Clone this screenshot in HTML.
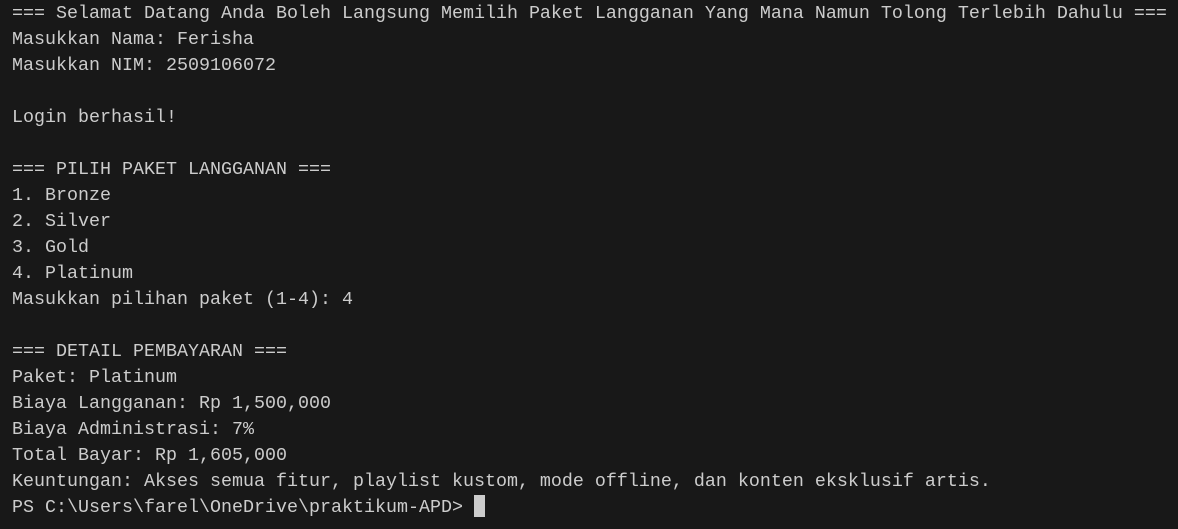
<!DOCTYPE html>
<html><head><meta charset="utf-8"><style>
html,body{margin:0;padding:0;background:#181818;width:1178px;height:529px;overflow:hidden}
pre{margin:0;position:absolute;left:12px;top:1px;font-family:"Liberation Mono",monospace;font-size:18.33px;line-height:26px;color:#cccccc;white-space:pre}
.cur{display:inline-block;width:11px;height:22px;background:#cccccc;vertical-align:-5px}
</style></head><body><pre>=== Selamat Datang Anda Boleh Langsung Memilih Paket Langganan Yang Mana Namun Tolong Terlebih Dahulu ===
Masukkan Nama: Ferisha
Masukkan NIM: 2509106072

Login berhasil!

=== PILIH PAKET LANGGANAN ===
1. Bronze
2. Silver
3. Gold
4. Platinum
Masukkan pilihan paket (1-4): 4

=== DETAIL PEMBAYARAN ===
Paket: Platinum
Biaya Langganan: Rp 1,500,000
Biaya Administrasi: 7%
Total Bayar: Rp 1,605,000
Keuntungan: Akses semua fitur, playlist kustom, mode offline, dan konten eksklusif artis.
PS C:\Users\farel\OneDrive\praktikum-APD&gt; <span class="cur"></span></pre></body></html>
